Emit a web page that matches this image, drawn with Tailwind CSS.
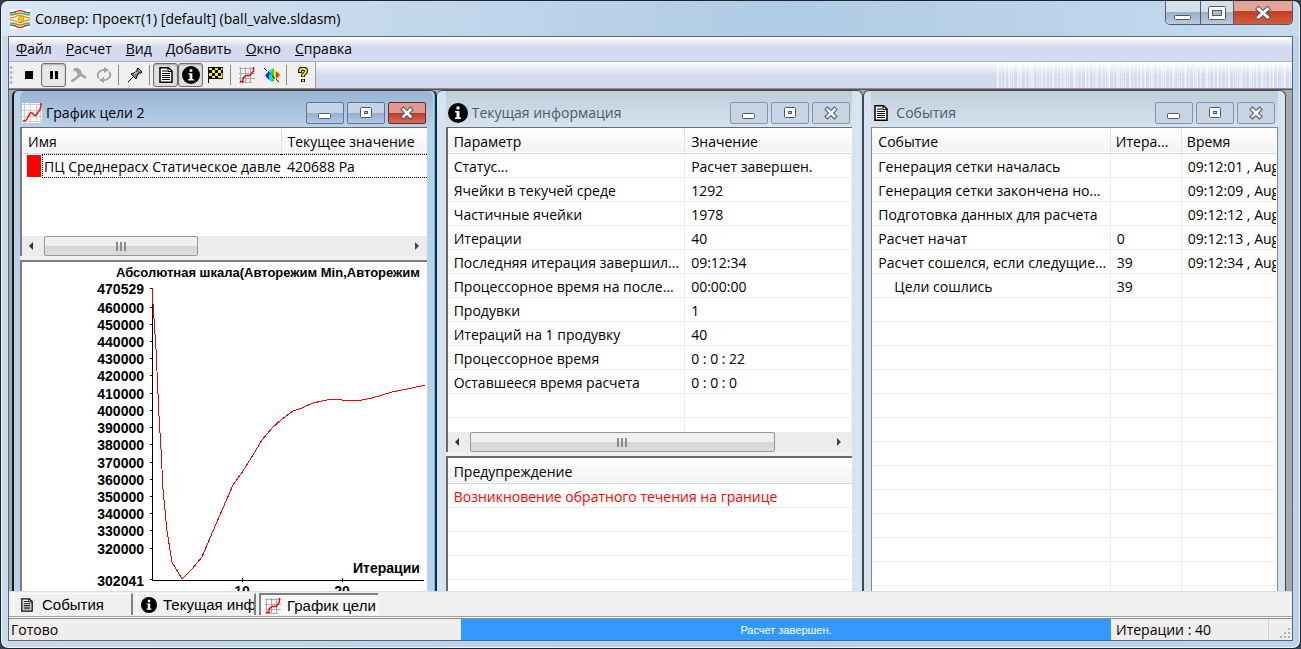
<!DOCTYPE html>
<html lang="ru">
<head>
<meta charset="utf-8">
<title>Солвер: Проект(1) [default] (ball_valve.sldasm)</title>
<script src="https://cdn.jsdelivr.net/npm/@tailwindcss/browser@4"></script>
</head>
<body class="h-screen overflow-hidden bg-[#3a3f4a] text-black text-[14px] leading-5 font-['Open_Sans','Noto_Sans',sans-serif]">

<svg class="hidden" aria-hidden="true">
  <defs>
    <symbol id="i-chart" viewBox="0 0 20 20">
      <path d="M0 1.500h20M0 7.500h20M0 13.500h20M0 18.500h20M2.500 0v20M8.500 0v20M14.500 0v20M18.500 0v20" stroke="#cacaca" fill="none"/>
      <path d="M1 18c4 0 4-2 6-6s3-2 5 0 3-2 5-4 2-4 2-8" stroke="#e01c1c" stroke-width="1.700" fill="none"/>
    </symbol>
    <symbol id="i-chart16" viewBox="0 0 16 16">
      <path d="M1.500 0v16M6.500 0v16M11.500 0v16M0 1.500h16M0 6.500h16M0 11.500h16M0 15.500h13" stroke="#aaa" fill="none"/>
      <path d="M1 14.500h3V11l3-2.500h4L14.500 4V0" stroke="#e80000" stroke-width="1.300" fill="none"/>
    </symbol>
    <symbol id="i-info" viewBox="0 0 20 20">
      <circle cx="10" cy="10" r="10" fill="#000"/>
      <path d="M8.5 3.5h3v3h-3zM7 8h4.5v6.5H13V16H7v-1.500h1.500V9.500H7z" fill="#fff"/>
    </symbol>
    <symbol id="i-doc" viewBox="0 0 14 16">
      <path d="M1 .75h8.500L13 4v11.250H1z" fill="#fff" stroke="#000" stroke-width="1.500"/>
      <path d="M9 1v3.500h4M3 4h5M3 6.500h8M3 8.500h8M3 10.500h8M3 12.500h8" fill="none" stroke="#000" stroke-width="1.100"/>
    </symbol>
    <symbol id="i-min" viewBox="0 0 14 14"><rect x=".5" y="7.500" width="12" height="5" rx="1" fill="#fff" stroke="#535666"/></symbol>
    <symbol id="i-max" viewBox="0 0 14 14"><rect x="1.500" y="1.500" width="11" height="10" rx="1" fill="#fff" stroke="#535666"/><rect x="5.500" y="5.500" width="3" height="2" fill="#b8c8da" stroke="#535666"/></symbol>
    <symbol id="i-close" viewBox="0 0 14 14"><path d="M3.500 3.500l7 7M10.500 3.500l-7 7" stroke="#535666" stroke-width="4.600" stroke-linecap="square"/><path d="M3.500 3.500l7 7M10.500 3.500l-7 7" stroke="#fff" stroke-width="2.600" stroke-linecap="square"/></symbol>
  </defs>
</svg>

<div class="flex h-full flex-col rounded-lg border border-[#20232b] bg-linear-to-r from-[#c9dcef] via-[#b4cfea] to-[#bcd5ee] px-[7px] pb-[7px] shadow-[inset_0_0_0_1px_#eef6fd]">

  <!-- Title bar -->
  <header class="-mx-[6px] flex h-[35px] shrink-0 items-start justify-between rounded-t-lg bg-linear-to-r from-[#d9e6f3] via-[#b0cbe6] via-60% to-[#c6daee] pr-[6px] pl-2">
    <div class="flex h-[35px] items-center gap-[5px]">
      <svg class="size-5 bg-white" viewBox="0 0 20 20" fill="none" aria-hidden="true">
        <path d="M4 4q6-5 12 0M4 16q6 5 12 0" stroke="#e03020" stroke-width="1.600"/>
        <path d="M0 6q4 0 6-1t4-1 4 1 6 1M0 14q4 0 6 1t4 1 4-1 6-1" stroke="#6fa838" stroke-width="1.500"/>
        <path d="M0 4q3 0 5-1M20 4q-3 0-5-1M0 16q3 0 5 1M20 16q-3 0-5 1" stroke="#2f6fb4" stroke-width="1.400"/>
        <path d="M0 9q4 0 6-1.500t4-1.300 4 1.300T20 9M0 11q4 0 6 1.500t4 1.300 4-1.300T20 11" stroke="#e88a20" stroke-width="1.300"/>
        <circle cx="11" cy="10" r="3" fill="#f5c800" stroke="#b88a00" stroke-width=".6"/>
      </svg>
      <h1 class="whitespace-nowrap">Солвер: Проект(1) [default] (ball_valve.sldasm)</h1>
    </div>
    <div class="flex h-6 overflow-hidden rounded-b-[5px] border border-t-0 border-[#4b5b72]">
      <button aria-label="Свернуть" class="flex w-[35px] items-center justify-center border-r border-[#4b5b72] bg-linear-to-b from-[#d5e0eb] from-50% via-[#9db0c6] via-50% to-[#b9cbdd]">
        <svg class="mt-1 h-[14px] w-[18px]" viewBox="0 0 18 14"><rect x=".5" y="7.500" width="16" height="4" rx="1" fill="#fff" stroke="#535666"/></svg></button>
      <button aria-label="Развернуть" class="flex w-[33px] items-center justify-center border-r border-[#4b5b72] bg-linear-to-b from-[#d5e0eb] from-50% via-[#9db0c6] via-50% to-[#b9cbdd]">
        <svg class="h-[14px] w-[18px]" viewBox="0 0 18 14"><rect x=".5" y=".5" width="17" height="13" rx="1" fill="#fff" stroke="#535666"/><rect x="4.500" y="4.500" width="9" height="5" fill="#a9bacd" stroke="#535666"/></svg></button>
      <button aria-label="Закрыть" class="flex w-[58px] items-center justify-center bg-linear-to-b from-[#e0a596] from-45% via-[#c63c22] via-45% to-[#cf5f3c]">
        <svg class="h-4 w-[18px]" viewBox="0 0 18 16"><path d="M4.500 4l9 8M13.500 4l-9 8" stroke="#535666" stroke-width="5" stroke-linecap="square"/><path d="M4.500 4l9 8M13.500 4l-9 8" stroke="#fff" stroke-width="3" stroke-linecap="square"/></svg></button>
    </div>
  </header>

  <div class="flex min-h-0 flex-1 flex-col border border-[#5b6472] bg-[#f0f0f0]">
    <!-- Menu -->
    <nav class="flex h-[25px] shrink-0 items-center gap-[14px] border-b border-[#b2aeb9] bg-linear-to-b from-white to-[#d5dbee] to-40% pl-[7px]">
      <a href="#"><u>Ф</u>айл</a>
      <a href="#"><u>Р</u>асчет</a>
      <a href="#"><u>В</u>ид</a>
      <a href="#"><u>Д</u>обавить</a>
      <a href="#"><u>О</u>кно</a>
      <a href="#"><u>С</u>правка</a>
    </nav>

    <!-- Toolbar -->
    <div class="flex h-[27px] shrink-0 border-b border-[#8f8b94] bg-linear-to-b from-white to-[#d5dbee] to-50%">
      <div class="flex items-center border-r border-[#9a9a9a] bg-[#f0f0f0]">
        <span class="mr-[2px] h-5 w-[5px] bg-[radial-gradient(circle,#b3b8d2_1px,transparent_2px)] bg-[length:4px_5px]"></span>
        <button aria-label="Стоп" class="flex h-6 w-[25px] items-center justify-center"><span class="size-2 bg-black"></span></button>
        <button aria-label="Пауза" class="flex h-6 w-[25px] items-center justify-center gap-[2px] rounded-[3px] border border-[#6f6f6f] bg-[#e9e9e9] shadow-[inset_0_1px_2px_#aaa]"><span class="h-2 w-[3px] bg-black"></span><span class="h-2 w-[3px] bg-black"></span></button>
        <button aria-label="Построить" class="flex h-6 w-[25px] items-center justify-center">
          <svg class="size-4" viewBox="0 0 16 16" fill="#a3a3a3"><path d="M3 1h4l3 2.500 1 3.500 4 2v3l-3-1.500-2-1.500-4 3-4 3H0v-2l4-2.500 3-3-2-3-3-1z"/></svg></button>
        <button aria-label="Обновить" class="flex h-6 w-[25px] items-center justify-center">
          <svg class="size-4" viewBox="0 0 16 16" fill="none" stroke="#a3a3a3" stroke-width="1.800"><path d="M3 11.500C-.5 7 4 2 9 3M13 4.500c3.500 4.500-1 9.500-6 8.500"/><path d="M8 0l5 3-5 3zM8 10l-5 3 5 3z" fill="#a3a3a3" stroke="none"/></svg></button>
        <span class="mr-[3px] ml-[2px] h-5 w-px bg-[#8a8a8a]"></span>
        <button aria-label="Закрепить" class="flex h-6 w-[25px] items-center justify-center">
          <svg class="size-4" viewBox="0 0 16 16"><path d="M1 15l5-5" stroke="#000"/><path d="M4 7l3-1 3-2V2l1-1 4 4-1 1h-2l-2 3-1 3z" fill="#808080" stroke="#000"/><path d="M7 7l3-2" stroke="#ddd"/></svg></button>
        <span class="mr-[3px] ml-[2px] h-5 w-px bg-[#8a8a8a]"></span>
        <button aria-label="События" class="flex h-6 w-[25px] items-center justify-center rounded-[3px] border border-[#6f6f6f] bg-[#e0e0e0] shadow-[inset_0_1px_2px_#aaa]"><svg class="h-4 w-[14px]"><use href="#i-doc"/></svg></button>
        <button aria-label="Информация" class="flex h-6 w-[25px] items-center justify-center rounded-[3px] border border-[#6f6f6f] bg-[#e0e0e0] shadow-[inset_0_1px_2px_#aaa]"><svg class="size-[18px]"><use href="#i-info"/></svg></button>
        <button aria-label="Цели" class="flex h-6 w-[25px] items-center justify-center">
          <svg class="h-4 w-[15px]" viewBox="0 0 15 16"><path d="M.5 0v16M0 .5h15v11H0" stroke="#000" fill="#ffec00"/><path d="M4 0h3v3H4zM10 0h3v3h-3zM1 3h3v3H1zM7 3h3v3H7zM13 3h2v3h-2zM4 6h3v3H4zM10 6h3v3h-3zM1 9h3v3H1zM7 9h3v3H7z" fill="#000"/></svg></button>
        <span class="mr-[3px] ml-[2px] h-5 w-px bg-[#8a8a8a]"></span>
        <button aria-label="График цели" class="flex h-6 w-[25px] items-center justify-center"><svg class="size-4"><use href="#i-chart16"/></svg></button>
        <button aria-label="Картина в сечении" class="flex h-6 w-[25px] items-center justify-center">
          <svg class="size-4" viewBox="0 0 16 16"><path d="M5 4v9L1 8.500z" fill="#1428ff"/><path d="M5 4l3-2v13l-3-2z" fill="#00e0f0"/><path d="M8 2l2-1v13l-2 1z" fill="#22e030"/><path d="M10 2l2 1v9l-2 2z" fill="#ffee00"/><path d="M12 4v8l4-4z" fill="#ff2800"/><path d="M0 1l15 14" stroke="#000" stroke-dasharray="4 1.500"/></svg></button>
        <span class="mr-[3px] ml-[2px] h-5 w-px bg-[#8a8a8a]"></span>
        <button aria-label="Справка" class="flex h-6 w-[25px] items-center justify-center">
          <svg class="size-4" viewBox="0 0 16 16" fill="none"><path d="M5 6V4c0-3 6-3 6 0 0 2.500-3 2.500-3 5v1M8 12v3" stroke="#000" stroke-width="4"/><path d="M5 5V4c0-3 6-3 6 0 0 2.500-3 2.500-3 5v.5M8 12.500v2" stroke="#ffe800" stroke-width="2"/></svg></button>
      </div>
      <div class="ml-auto w-[23%] bg-[repeating-linear-gradient(90deg,#ffffff80_0_1px,transparent_1px_4px),repeating-linear-gradient(90deg,#ffffff66_0_2px,transparent_2px_11px),repeating-linear-gradient(90deg,#ffffff66_0_1px,transparent_1px_7px)]"></div>
    </div>

    <!-- Document windows -->
    <main class="flex min-h-0 flex-1 items-stretch border-t border-b border-t-[#55565a] border-b-[#dcdcdc] bg-[#a9a9ab] pr-[6px] pl-[3px]">

      <section class="flex min-w-0 flex-1 flex-col rounded-t-md border-x-2 border-t border-t-[#3c4350] border-r-[#1b2430] border-l-[#17191d] bg-[#b9d1ea] pr-[8px] pl-[6px] shadow-[inset_-1px_0_0_#3fd0ee]">
        <div class="-mr-[6px] flex h-9 shrink-0 items-center gap-1 rounded-t-md bg-linear-to-b from-[#99b4d1] to-[#b9d1ea] pt-[7px] pr-[6px]">
          <svg class="ml-[2px] size-5 bg-white"><use href="#i-chart"/></svg>
          <h2 class="flex-1 truncate">График цели 2</h2>
          <div class="flex gap-[3px] pr-px">
            <button aria-label="Свернуть" class="flex h-[22px] w-[38px] items-center justify-center rounded-[2px] border border-[#5b7598] bg-linear-to-b from-[#c3d4e8] from-50% via-[#94adcb] via-50% to-[#b3cae4]"><svg class="size-[14px]"><use href="#i-min"/></svg></button>
            <button aria-label="Развернуть" class="flex h-[22px] w-[38px] items-center justify-center rounded-[2px] border border-[#5b7598] bg-linear-to-b from-[#c3d4e8] from-50% via-[#94adcb] via-50% to-[#b3cae4]"><svg class="size-[14px]"><use href="#i-max"/></svg></button>
            <button aria-label="Закрыть" class="flex h-[22px] w-[38px] items-center justify-center rounded-[2px] border border-[#6e2a2c] bg-linear-to-b from-[#dc9a90] from-50% via-[#b83a24] via-50% to-[#d2705a]"><svg class="size-[14px]"><use href="#i-close"/></svg></button>
          </div>
        </div>
        <div class="flex h-[129px] shrink-0 flex-col overflow-hidden border-t border-l-2 border-t-[#696969] border-l-[#7d7d7d] bg-white">
          <table class="w-full table-fixed border-collapse text-left whitespace-nowrap [&_td]:overflow-hidden [&_th]:font-normal">
            <colgroup><col class="w-[259px]"><col></colgroup>
            <thead><tr class="h-[25px] border-b border-[#d5d5d5] bg-linear-to-b from-white to-[#f2f3f5]"><th class="border-r border-[#e2e3ea] pt-1 pl-[6px]">Имя</th><th class="pt-1 pl-[6px]">Текущее значение</th></tr></thead>
            <tbody><tr class="h-[26px]">
              <td class="p-0"><div class="flex h-6 items-center pl-[5px]"><span class="h-[22px] w-[14px] shrink-0 bg-[#ff0000]"></span><span class="ml-px h-6 min-w-0 flex-1 overflow-hidden border border-r-0 border-dotted border-black pl-px leading-6">ПЦ Среднерасх Статическое давление</span></div></td>
              <td class="p-0"><div class="h-6 border-y border-dotted border-black pl-[6px] leading-6">420688 Pa</div></td>
            </tr></tbody>
          </table>
          <div class="mt-auto flex h-5 shrink-0 items-center bg-[#ececed] px-[6px]">
            <svg class="mr-[10px] h-2 w-[6px]" viewBox="0 0 6 8"><path d="M5 0v8L1 4z" fill="#333"/></svg>
            <div class="flex h-5 w-[154px] items-center justify-center gap-[2px] rounded-[2px] border border-[#979797] bg-linear-to-b from-[#f0f0f0] from-50% via-[#d4d4d6] via-50% to-[#dedee0]"><i class="h-[9px] w-[2px] bg-[#8a8a8a]"></i><i class="h-[9px] w-[2px] bg-[#8a8a8a]"></i><i class="h-[9px] w-[2px] bg-[#8a8a8a]"></i></div>
            <svg class="mr-px ml-auto h-2 w-[6px]" viewBox="0 0 6 8"><path d="M1 0v8l4-4z" fill="#444"/></svg>
          </div>
        </div>
        <div class="h-1 shrink-0 bg-[#f0f0f0]"></div>
        <div class="min-h-0 flex-1 overflow-hidden border-t-2 border-l-2 border-[#7d7d7d] bg-white pt-px">
          <svg class="block h-[340px] w-full font-['Liberation_Sans',sans-serif] text-[14px] font-bold" shape-rendering="crispEdges" role="img" aria-label="График сходимости цели">
            <text x="94" y="14" class="text-[13px]">Абсолютная шкала(Авторежим Min,Авторежим</text>
            <g text-anchor="end">
              <text x="122" y="31">470529</text><text x="122" y="50">460000</text><text x="122" y="67">450000</text><text x="122" y="84">440000</text><text x="122" y="101">430000</text><text x="122" y="118">420000</text><text x="122" y="136">410000</text><text x="122" y="153">400000</text><text x="122" y="170">390000</text><text x="122" y="187">380000</text><text x="122" y="205">370000</text><text x="122" y="222">360000</text><text x="122" y="239">350000</text><text x="122" y="256">340000</text><text x="122" y="273">330000</text><text x="122" y="291">320000</text><text x="122" y="323">302041</text>
            </g>
            <path d="M130.500 26V317.500H402M128 25.500h3M128 44.500h3M128 61.500h3M128 78.500h3M128 95.500h3M128 112.500h3M128 130.500h3M128 147.500h3M128 164.500h3M128 181.500h3M128 199.500h3M128 216.500h3M128 233.500h3M128 250.500h3M128 267.500h3M128 285.500h3M128 316.500h3M220.500 315v4M320.500 315v4" fill="none" stroke="#000"/>
            <polyline points="130,25 132,56 134,86 137,153 139,186 141,226 145,268 150,299 160,316 170,306 180,294 191,268 201,245 211,222 221,208 231,192 240,177 250,165 260,156 271,148 280,145 291,140 300,138 310,136 320,137 340,137 350,135 360,132 370,129 380,127 390,125 403,122" fill="none" stroke="#f00000"/>
            <text x="331" y="310">Итерации</text>
            <text x="220" y="333" text-anchor="middle">10</text><text x="320" y="333" text-anchor="middle">20</text>
          </svg>
        </div>
      </section>

      <section class="flex min-w-0 flex-1 flex-col rounded-t-md border-t border-r border-[#44474d] bg-[#d6e3f1] pr-[10px] pl-[9px]">
        <div class="flex h-9 shrink-0 items-center gap-1 bg-linear-to-b from-[#bfcddb] to-[#d6e3f1] pt-[7px] text-[#4f5a66]">
          <svg class="ml-[2px] size-5"><use href="#i-info"/></svg>
          <h2 class="flex-1 truncate">Текущая информация</h2>
          <div class="flex gap-[3px] pr-[2px]">
            <button aria-label="Свернуть" class="flex h-[22px] w-[38px] items-center justify-center rounded-[2px] border border-[#8394b0] bg-[#c6d4e3]"><svg class="size-[14px]"><use href="#i-min"/></svg></button>
            <button aria-label="Развернуть" class="flex h-[22px] w-[38px] items-center justify-center rounded-[2px] border border-[#8394b0] bg-[#c6d4e3]"><svg class="size-[14px]"><use href="#i-max"/></svg></button>
            <button aria-label="Закрыть" class="flex h-[22px] w-[38px] items-center justify-center rounded-[2px] border border-[#8394b0] bg-[#c6d4e3]"><svg class="size-[14px]"><use href="#i-close"/></svg></button>
          </div>
        </div>
        <div class="flex h-[325px] shrink-0 flex-col overflow-hidden border-t border-l-2 border-[#696969] bg-white">
          <div class="min-h-0 flex-1 overflow-hidden">
          <table class="w-full table-fixed border-collapse text-left whitespace-nowrap [&_tbody_tr]:h-6 [&_td]:overflow-hidden [&_td]:border-r [&_td]:border-b [&_td]:border-[#ececec] [&_td]:p-0 [&_td]:pt-[3px] [&_td]:pl-[6px] [&_th]:font-normal">
            <colgroup><col class="w-[237px]"><col></colgroup>
            <thead><tr class="h-[25px] border-b border-[#d5d5d5] bg-linear-to-b from-white to-[#f2f3f5]"><th class="border-r border-[#e2e3ea] pt-1 pl-[6px]">Параметр</th><th class="pt-1 pl-[6px]">Значение</th></tr></thead>
            <tbody>
              <tr><td>Статус...</td><td>Расчет завершен.</td></tr>
              <tr><td>Ячейки в текучей среде</td><td>1292</td></tr>
              <tr><td>Частичные ячейки</td><td>1978</td></tr>
              <tr><td>Итерации</td><td>40</td></tr>
              <tr><td>Последняя итерация завершил...</td><td>09:12:34</td></tr>
              <tr><td>Процессорное время на после...</td><td>00:00:00</td></tr>
              <tr><td>Продувки</td><td>1</td></tr>
              <tr><td>Итераций на 1 продувку</td><td>40</td></tr>
              <tr><td>Процессорное время</td><td>0 : 0 : 22</td></tr>
              <tr><td>Оставшееся время расчета</td><td>0 : 0 : 0</td></tr>
              <tr><td></td><td></td></tr>
              <tr><td></td><td></td></tr>
            </tbody>
          </table>
          </div>
          <div class="flex h-5 shrink-0 items-center bg-[#ececed] px-[6px]">
            <svg class="mr-[10px] h-2 w-[6px]" viewBox="0 0 6 8"><path d="M5 0v8L1 4z" fill="#333"/></svg>
            <div class="flex h-5 w-[305px] items-center justify-center gap-[2px] rounded-[2px] border border-[#979797] bg-linear-to-b from-[#f0f0f0] from-50% via-[#d4d4d6] via-50% to-[#dedee0]"><i class="h-[9px] w-[2px] bg-[#8a8a8a]"></i><i class="h-[9px] w-[2px] bg-[#8a8a8a]"></i><i class="h-[9px] w-[2px] bg-[#8a8a8a]"></i></div>
            <svg class="mr-1 ml-auto h-2 w-[6px]" viewBox="0 0 6 8"><path d="M1 0v8l4-4z" fill="#444"/></svg>
          </div>
        </div>
        <div class="h-1 shrink-0 bg-[#f0f0f0]"></div>
        <div class="min-h-0 flex-1 overflow-hidden border-t-2 border-l-2 border-[#696969] bg-white">
          <table class="w-full table-fixed border-collapse text-left whitespace-nowrap [&_tbody_tr]:h-6 [&_td]:border-b [&_td]:border-[#ececec] [&_td]:p-0 [&_td]:pt-[3px] [&_td]:pl-[6px]">
            <thead><tr class="h-[25px] border-b border-[#d5d5d5] bg-linear-to-b from-white to-[#f2f3f5]"><th class="pt-1 pl-[6px] font-normal">Предупреждение</th></tr></thead>
            <tbody>
              <tr><td class="text-[#ff0000]">Возникновение обратного течения на границе</td></tr>
              <tr><td></td></tr><tr><td></td></tr><tr><td></td></tr><tr><td></td></tr>
            </tbody>
          </table>
        </div>
      </section>

      <section class="flex min-w-0 flex-1 flex-col rounded-t-md border-x border-t border-[#44474d] bg-[#d6e3f1] px-[7px]">
        <div class="flex h-9 shrink-0 items-center gap-2 bg-linear-to-b from-[#bfcddb] to-[#d6e3f1] pt-[7px] text-[#4f5a66]">
          <svg class="ml-[3px] h-[18px] w-[14px]"><use href="#i-doc"/></svg>
          <h2 class="flex-1 truncate">События</h2>
          <div class="flex gap-[3px] pr-[3px]">
            <button aria-label="Свернуть" class="flex h-[22px] w-[38px] items-center justify-center rounded-[2px] border border-[#8394b0] bg-[#c6d4e3]"><svg class="size-[14px]"><use href="#i-min"/></svg></button>
            <button aria-label="Развернуть" class="flex h-[22px] w-[38px] items-center justify-center rounded-[2px] border border-[#8394b0] bg-[#c6d4e3]"><svg class="size-[14px]"><use href="#i-max"/></svg></button>
            <button aria-label="Закрыть" class="flex h-[22px] w-[38px] items-center justify-center rounded-[2px] border border-[#8394b0] bg-[#c6d4e3]"><svg class="size-[14px]"><use href="#i-close"/></svg></button>
          </div>
        </div>
        <div class="min-h-0 flex-1 overflow-hidden border-x border-t border-[#828790] bg-white pr-px">
          <table class="w-full table-fixed border-collapse text-left whitespace-nowrap [&_tbody_tr]:h-6 [&_td]:overflow-hidden [&_td]:border-r [&_td]:border-b [&_td]:border-[#ececec] [&_td]:p-0 [&_td]:pt-[3px] [&_td]:pl-[6px] [&_td:last-child]:border-r-0 [&_th]:font-normal">
            <colgroup><col class="w-[238px]"><col class="w-[71px]"><col></colgroup>
            <thead><tr class="h-[25px] border-b border-[#d5d5d5] bg-linear-to-b from-white to-[#f2f3f5]"><th class="border-r border-[#e2e3ea] pt-1 pl-[6px]">Событие</th><th class="border-r border-[#e2e3ea] pt-1 pl-[5px]">Итера...</th><th class="pt-1 pl-[5px]">Время</th></tr></thead>
            <tbody>
              <tr><td>Генерация сетки началась</td><td></td><td>09:12:01 , Aug 12</td></tr>
              <tr><td>Генерация сетки закончена но...</td><td></td><td>09:12:09 , Aug 12</td></tr>
              <tr><td>Подготовка данных для расчета</td><td></td><td>09:12:12 , Aug 12</td></tr>
              <tr><td>Расчет начат</td><td>0</td><td>09:12:13 , Aug 12</td></tr>
              <tr><td>Расчет сошелся, если следущие...</td><td>39</td><td>09:12:34 , Aug 12</td></tr>
              <tr><td><span class="pl-4">Цели сошлись</span></td><td>39</td><td></td></tr>
              <tr><td></td><td></td><td></td></tr><tr><td></td><td></td><td></td></tr><tr><td></td><td></td><td></td></tr>
              <tr><td></td><td></td><td></td></tr><tr><td></td><td></td><td></td></tr><tr><td></td><td></td><td></td></tr>
              <tr><td></td><td></td><td></td></tr><tr><td></td><td></td><td></td></tr><tr><td></td><td></td><td></td></tr>
              <tr><td></td><td></td><td></td></tr><tr><td></td><td></td><td></td></tr><tr><td></td><td></td><td></td></tr>
              <tr><td></td><td></td><td></td></tr>
            </tbody>
          </table>
        </div>
      </section>
    </main>

    <!-- Window tabs -->
    <div class="flex h-[25px] shrink-0 gap-[3px] border-b border-[#a0a0a0] pt-px pb-px pl-1 font-['Liberation_Sans',sans-serif] text-[15px]">
      <button class="flex w-[120px] items-center gap-[9px] overflow-hidden border-t border-r-2 border-l border-t-white border-r-[#808080] border-l-white pl-[7px] whitespace-nowrap"><svg class="h-[14px] w-3 shrink-0"><use href="#i-doc"/></svg>События</button>
      <button class="flex w-[120px] items-center gap-[6px] overflow-hidden border-t border-r-2 border-l border-t-white border-r-[#808080] border-l-white pl-1 whitespace-nowrap"><svg class="size-4 shrink-0"><use href="#i-info"/></svg>Текущая информация</button>
      <button class="flex w-[119px] items-center gap-[6px] overflow-hidden border-t-2 border-l-2 border-[#808080] bg-[#f8f8f8] pt-px pl-1 whitespace-nowrap"><svg class="size-4 shrink-0"><use href="#i-chart16"/></svg>График цели 2</button>
    </div>

    <!-- Status bar -->
    <footer class="flex h-[23px] shrink-0 items-stretch bg-[#f0eded] pt-[2px] shadow-[inset_0_1px_0_#f8f8f8,inset_0_2px_0_#8f8b8b]">
      <div class="flex w-[452px] items-center pt-px pl-[2px]">Готово</div>
      <div role="progressbar" aria-valuenow="100" aria-label="Ход расчета" class="flex min-w-0 flex-1 items-center justify-center bg-[#3399ff] font-['Liberation_Sans',sans-serif] text-[11px] text-white">Расчет завершен.</div>
      <div class="flex w-[158px] items-center border-r border-[#d0cccc] pt-px pl-[5px]">Итерации : 40</div>
      <div class="flex w-[23px] items-end justify-end"><svg class="size-3" viewBox="0 0 12 12" fill="#b5b0b0"><path d="M8 0h2v2H8zM4 4h2v2H4zM8 4h2v2H8zM0 8h2v2H0zM4 8h2v2H4zM8 8h2v2H8z"/></svg></div>
    </footer>
  </div>
</div>
</body>
</html>
